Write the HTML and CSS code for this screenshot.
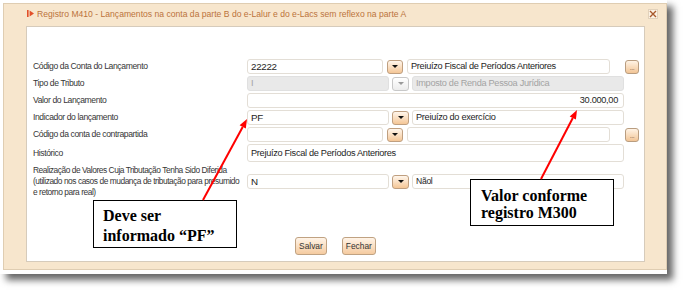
FILE: index.html
```html
<!DOCTYPE html>
<html lang="pt-BR">
<head>
<meta charset="utf-8">
<title>Registro M410</title>
<link rel="stylesheet" href="styles.css">
</head>
<body>
<div class="shot">
  <div class="dialog">
    <div class="titlebar">
      <div class="title">
        <svg class="flag" width="7" height="7" viewBox="0 0 7 7"><rect x="0" y="0" width="1.6" height="7" fill="#e2502a"/><polygon points="2.6,0.5 7,3.5 2.6,6.5" fill="#e2502a"/></svg>
        <span>Registro M410 - Lançamentos na conta da parte B do e-Lalur e do e-Lacs sem reflexo na parte A</span>
      </div>
      <div class="close"><svg width="8" height="8" viewBox="0 0 8 8"><path d="M1 1 L7 7 M7 1 L1 7" stroke="#a8582c" stroke-width="1.4"/></svg></div>
    </div>
    <div class="panel">
      <div class="row">
        <div class="label">Código da Conta do Lançamento</div>
        <div class="fields">
          <div class="inp w-a1 big">22222</div>
          <div class="drop"><span class="tri"></span></div>
          <div class="inp w-a2">Preiuízo Fiscal de Períodos Anteriores</div>
          <div class="dots">...</div>
        </div>
      </div>
      <div class="row">
        <div class="label">Tipo de Tributo</div>
        <div class="fields gap3">
          <div class="inp dis w-b1">I</div>
          <div class="drop drop-dis"><span class="tri"></span></div>
          <div class="inp dis w-b2">Imposto de Renda Pessoa Jurídica</div>
        </div>
      </div>
      <div class="row">
        <div class="label">Valor do Lançamento</div>
        <div class="fields">
          <div class="inp w-c num">30.000,00</div>
        </div>
      </div>
      <div class="row">
        <div class="label">Indicador do lançamento</div>
        <div class="fields gap3">
          <div class="inp w-b1 big">PF</div>
          <div class="drop"><span class="tri"></span></div>
          <div class="inp w-b2">Preiuízo do exercício</div>
        </div>
      </div>
      <div class="row">
        <div class="label">Código da conta de contrapartida</div>
        <div class="fields">
          <div class="inp w-a1"></div>
          <div class="drop"><span class="tri"></span></div>
          <div class="inp w-a2"></div>
          <div class="dots">...</div>
        </div>
      </div>
      <div class="row row-tall">
        <div class="label">Histórico</div>
        <div class="fields">
          <div class="inp w-c tall">Prejuízo Fiscal de Períodos Anteriores</div>
        </div>
      </div>
      <div class="row row-multi">
        <div class="label">Realização de Valores Cuja Tributação Tenha Sido Diferida<br>(utilizado nos casos de mudança de tributação para presumido<br>e retorno para real)</div>
        <div class="fields gap3">
          <div class="inp w-b1 big">N</div>
          <div class="drop"><span class="tri"></span></div>
          <div class="inp w-b2 small">Nãol</div>
        </div>
      </div>
      <div class="actions">
        <div class="btn">Salvar</div>
        <div class="btn">Fechar</div>
      </div>
    </div>
  </div>
</div>

<div class="note note-pf">Deve ser<br>informado “PF”</div>
<div class="note note-m300">Valor conforme<br>registro M300</div>

<svg class="arrows" width="685" height="290" viewBox="0 0 685 290">
  <line x1="203" y1="200" x2="242.7" y2="126.9" stroke="#ff0000" stroke-width="2"/>
  <polygon points="247,119 245.8,128.6 239.6,125.2" fill="#ff0000"/>
  <line x1="541" y1="179" x2="572.8" y2="118" stroke="#ff0000" stroke-width="2"/>
  <polygon points="577,110 575.9,119.6 569.7,116.4" fill="#ff0000"/>
</svg>
</body>
</html>
```
FILE: styles.css
```css
html, body {
  margin: 0;
  padding: 0;
  background: #ffffff;
}

body {
  width: 685px;
  height: 290px;
  overflow: hidden;
  font-family: "Liberation Sans", Arial, sans-serif;
}

.shot {
  width: 667px;
  height: 274px;
  box-sizing: border-box;
  padding: 3px 0 0 3px;
  background: #ffffff;
  box-shadow: 6px 6px 7px rgba(0, 0, 0, 0.6);
}

.dialog {
  width: 664px;
  height: 267px;
  box-sizing: border-box;
  background: #f7e6cd;
  border: 1px solid #dfcdb2;
  display: flex;
  flex-direction: column;
}

.titlebar {
  height: 22px;
  display: flex;
  align-items: center;
  justify-content: space-between;
  padding: 0 8px 3px 23px;
  box-sizing: border-box;
}

.title {
  display: flex;
  align-items: center;
  gap: 3px;
  color: #bb733c;
  font-size: 8.6px;
  white-space: nowrap;
}

.close {
  width: 10px;
  height: 10px;
  box-sizing: border-box;
  border: 1px solid #e2d2bc;
  background: #fbf2e4;
  display: flex;
  align-items: center;
  justify-content: center;
}

.panel {
  margin-left: 22px;
  width: 619px;
  height: 236px;
  box-sizing: border-box;
  background: #ffffff;
  border: 1px solid #d6cbbb;
  padding: 32px 0 6px 6px;
  display: flex;
  flex-direction: column;
}

.row {
  display: flex;
  align-items: center;
  height: 15px;
  margin-bottom: 2px;
}

.row-tall {
  height: 18px;
  margin-bottom: 3px;
}

.row-multi {
  height: 33px;
  margin-bottom: 0;
}

.label {
  width: 214px;
  flex: none;
  color: #363636;
  font-size: 8.6px;
  letter-spacing: -0.4px;
  line-height: 11px;
  white-space: nowrap;
}

.row-multi .label {
  font-size: 8.4px;
  letter-spacing: -0.45px;
}

.fields {
  display: flex;
  align-items: center;
  gap: 4px;
}

.fields.gap3 {
  gap: 3px;
}

.inp {
  height: 15px;
  box-sizing: border-box;
  border: 1px solid #e3ded6;
  border-radius: 3px;
  background: #ffffff;
  color: #1e1e1e;
  font-size: 9.2px;
  letter-spacing: -0.3px;
  line-height: 13px;
  padding: 0 3px;
  white-space: nowrap;
  overflow: hidden;
}

.inp.big {
  font-size: 9.8px;
}

.inp.small {
  font-size: 8.6px;
}

.inp.dis {
  background: #e9e9e9;
  border-color: #e0e0e0;
  color: #a3a3a3;
}

.inp.num {
  text-align: right;
  padding-right: 5px;
}

.inp.tall {
  height: 18px;
  line-height: 16px;
}

.w-a1 { width: 136px; }
.w-a2 { width: 203px; }
.w-b1 { width: 142px; }
.w-b2 { width: 212px; }
.w-c  { width: 377px; }

.drop {
  width: 16px;
  height: 14px;
  box-sizing: border-box;
  border: 1px solid #bf9f80;
  border-radius: 3px;
  background: linear-gradient(#fff6ec, #f4c696);
  display: flex;
  align-items: center;
  justify-content: center;
}

.fields.gap3 .drop {
  width: 17px;
}

.drop .tri {
  width: 0;
  height: 0;
  border-left: 3px solid transparent;
  border-right: 3px solid transparent;
  border-top: 3px solid #111111;
}

.drop-dis {
  border-color: #c8c8c8;
  background: linear-gradient(#ffffff, #ececec);
}

.drop-dis .tri {
  border-top-color: #9a9a9a;
}

.dots {
  width: 14px;
  height: 14px;
  margin-left: 11px;
  box-sizing: border-box;
  border: 1px solid #b99d80;
  border-radius: 3px;
  background: linear-gradient(#fff3e5, #f2c596);
  color: #8a6a50;
  font-size: 7px;
  line-height: 13px;
  text-align: center;
  letter-spacing: -0.5px;
}

.actions {
  margin-top: 39px;
  display: flex;
  justify-content: center;
  gap: 15px;
  padding-right: 6px;
}

.btn {
  height: 18px;
  box-sizing: border-box;
  padding: 0 3px;
  border: 1px solid #c0a282;
  border-radius: 3px;
  background: linear-gradient(#fff4e8, #f5cba0);
  color: #333333;
  font-size: 8.4px;
  line-height: 16px;
}

.note {
  position: absolute;
  box-sizing: border-box;
  background: #ffffff;
  border: 1.5px solid #000000;
  font-family: "Liberation Serif", "Times New Roman", serif;
  font-weight: bold;
  font-size: 16px;
  color: #000000;
  white-space: nowrap;
}

.note-pf {
  left: 93px;
  top: 200px;
  width: 144px;
  height: 48px;
  padding: 5px 0 0 9px;
  line-height: 20px;
}

.note-m300 {
  left: 470px;
  top: 179px;
  width: 144px;
  height: 47px;
  padding: 7px 0 0 10px;
  line-height: 17px;
}

.arrows {
  position: absolute;
  left: 0;
  top: 0;
  pointer-events: none;
}
```
